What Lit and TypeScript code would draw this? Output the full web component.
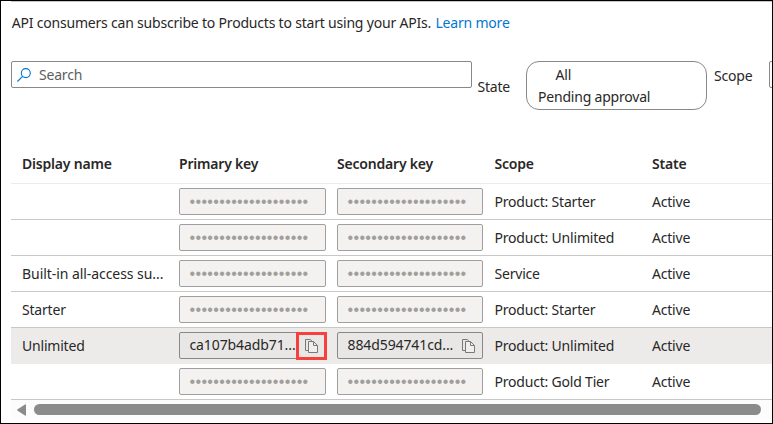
import { LitElement, html, css, svg, nothing } from "lit";
import { customElement, property } from "lit/decorators.js";

interface Subscription {
  name: string;
  scope: string;
  primary?: string;
  secondary?: string;
}

const MASK = "•".repeat(20);

const ROWS: Subscription[] = [
  { name: "", scope: "Product: Starter" },
  { name: "", scope: "Product: Unlimited" },
  { name: "Built-in all-access su...", scope: "Service" },
  { name: "Starter", scope: "Product: Starter" },
  {
    name: "Unlimited",
    scope: "Product: Unlimited",
    primary: "ca107b4adb71...",
    secondary: "884d594741cd...",
  },
  { name: "", scope: "Product: Gold Tier" },
];

const copyIcon = html`<svg width="13" height="15" viewBox="0 0 13 15" fill="none" stroke="#7a7978">
  ${svg`<path d="M3.5 11.5H.5V.5H5.2L7.5 2.7"/>
  <path fill="#f0efee" d="M3.5 2.5H8.5L12.5 6.5V13.5H3.5Z"/>
  <path d="M8.5 2.7V6.5H12.3"/>`}
</svg>`;

@customElement("key-field")
export class KeyField extends LitElement {
  @property() value?: string;
  @property({ type: Boolean }) marked = false;

  static styles = css`
    :host {
      display: block;
      min-width: 0;
    }
    .box {
      position: relative;
      box-sizing: border-box;
      display: flex;
      align-items: center;
      height: 27px;
      padding-left: 9.5px;
      border: 1px solid #a19f9d;
      border-radius: 2px;
      background: #f3f2f1;
      white-space: nowrap;
    }
    .open {
      border-color: #8a8886;
      background: #e8e7e6;
    }
    .mask {
      color: #a19f9d;
      font: 16px/20px "Liberation Sans", sans-serif;
      letter-spacing: 0.35px;
    }
    .text {
      flex: 1;
      line-height: 20px;
      margin-bottom: 2px;
      letter-spacing: -0.1px;
    }
    .copy {
      display: flex;
      margin: 1px 7px 0 0;
    }
    .mark {
      position: absolute;
      box-sizing: border-box;
      right: -2px;
      top: -1px;
      width: 31px;
      height: 28px;
      border: 3px solid #f93e3e;
    }
  `;

  render() {
    if (!this.value) {
      return html`<div class="box"><span class="mask">${MASK}</span></div>`;
    }
    return html`<div class="box open">
      <span class="text">${this.value}</span>
      <span class="copy">${copyIcon}</span>
      ${this.marked ? html`<span class="mark"></span>` : nothing}
    </div>`;
  }
}

@customElement("app-root")
export class AppRoot extends LitElement {
  static styles = css`
    :host {
      display: block;
      box-sizing: border-box;
      width: 773px;
      height: 424px;
      border: 1px solid #000;
      padding-left: 10px;
      overflow: hidden;
      background: #fff;
      color: #292827;
      font: 14px/20px "Noto Sans", "Open Sans", sans-serif;
      letter-spacing: -0.2px;
      white-space: nowrap;
    }
    .intro {
      box-sizing: border-box;
      border-top: 1px solid #c8c6c4;
      padding: 11px 0 0 0.7px;
      height: 60px;
    }
    .filters {
      display: flex;
      align-items: flex-start;
      height: 83px;
    }
    .link {
      color: #0078d4;
      margin-left: 1px;
    }
    .search {
      box-sizing: border-box;
      flex: none;
      display: flex;
      align-items: center;
      gap: 8px;
      width: 461px;
      height: 27px;
      padding-left: 5px;
      border: 1px solid #8a8886;
      border-radius: 2px;
      color: #605e5c;
    }
    .state-label {
      flex: none;
      width: 48.5px;
      padding: 16px 0 0 5.5px;
    }
    .options {
      box-sizing: border-box;
      flex: none;
      width: 181px;
      height: 49px;
      padding: 3px 0 0 11px;
      border: 1px solid #8a8886;
      border-radius: 13px;
    }
    .all {
      padding-left: 17.5px;
      height: 22px;
    }
    .scope-label {
      width: 55px;
      flex: none;
      padding: 5px 0 0 7px;
    }
    .scope-box {
      box-sizing: border-box;
      flex: none;
      width: 60px;
      height: 27px;
      border: 1px solid #8a8886;
      border-radius: 2px;
    }
    .head,
    .row {
      box-sizing: border-box;
      display: grid;
      grid-template-columns: 157px 158px 157.5px 157.5px 1fr;
      align-items: center;
      padding-left: 11px;
      border-bottom: 1px solid #c8c8c8;
      height: 36px;
    }
    .name-long {
      letter-spacing: -0.06px;
    }
    .primary {
      width: 147px;
    }
    .secondary {
      width: 146px;
    }
    .head {
      height: 40px;
      border-color: #edebe9;
      font-weight: 600;
    }
    .selected {
      background: #edebe9;
      border-color: #edebe9;
    }
    .scroll {
      display: flex;
      align-items: center;
      height: 19px;
      padding-left: 6px;
      background: #fcfcfc;
    }
    .thumb {
      width: 727px;
      height: 11px;
      margin-left: 8px;
      border-radius: 6px;
      background: #8b8b8b;
    }
  `;

  render() {
    return html`
      <div class="intro">
        <span class="lead">API consumers can subscribe to Products to start using your APIs.</span>
        <a class="link">Learn more</a>
      </div>
      <div class="filters">
        <div class="search">
          <svg width="14" height="14" viewBox="0 0 14 14" fill="none" stroke="#0078d4" stroke-width="1.1">
            <circle cx="8.8" cy="5.1" r="4.5" />
            <path d="M5.6 8.3L.4 13.5" />
          </svg>
          <span>Search</span>
        </div>
        <div class="state-label">State</div>
        <div class="options">
          <div class="all">All</div>
          <div class="pending">Pending approval</div>
        </div>
        <div class="scope-label">Scope</div>
        <div class="scope-box"></div>
      </div>
      <div class="head">
        <span>Display name</span>
        <span>Primary key</span>
        <span>Secondary key</span>
        <span>Scope</span>
        <span>State</span>
      </div>
      ${ROWS.map(
        (r) => html`<div class="row ${r.primary ? "selected" : ""}">
          <span class=${r.name.length > 15 ? "name-long" : ""}>${r.name}</span>
          <key-field class="primary" .value=${r.primary} ?marked=${!!r.primary}></key-field>
          <key-field class="secondary" .value=${r.secondary}></key-field>
          <span>${r.scope}</span>
          <span>Active</span>
        </div>`
      )}
      <div class="scroll">
        <svg width="9" height="12" viewBox="0 0 9 12"><path fill="#8b8b8b" d="M9 1V11Q9 12 8 11.6L.6 6.7Q-.2 6 .6 5.3L8 .4Q9 0 9 1Z" /></svg>
        <div class="thumb"></div>
      </div>
    `;
  }
}
